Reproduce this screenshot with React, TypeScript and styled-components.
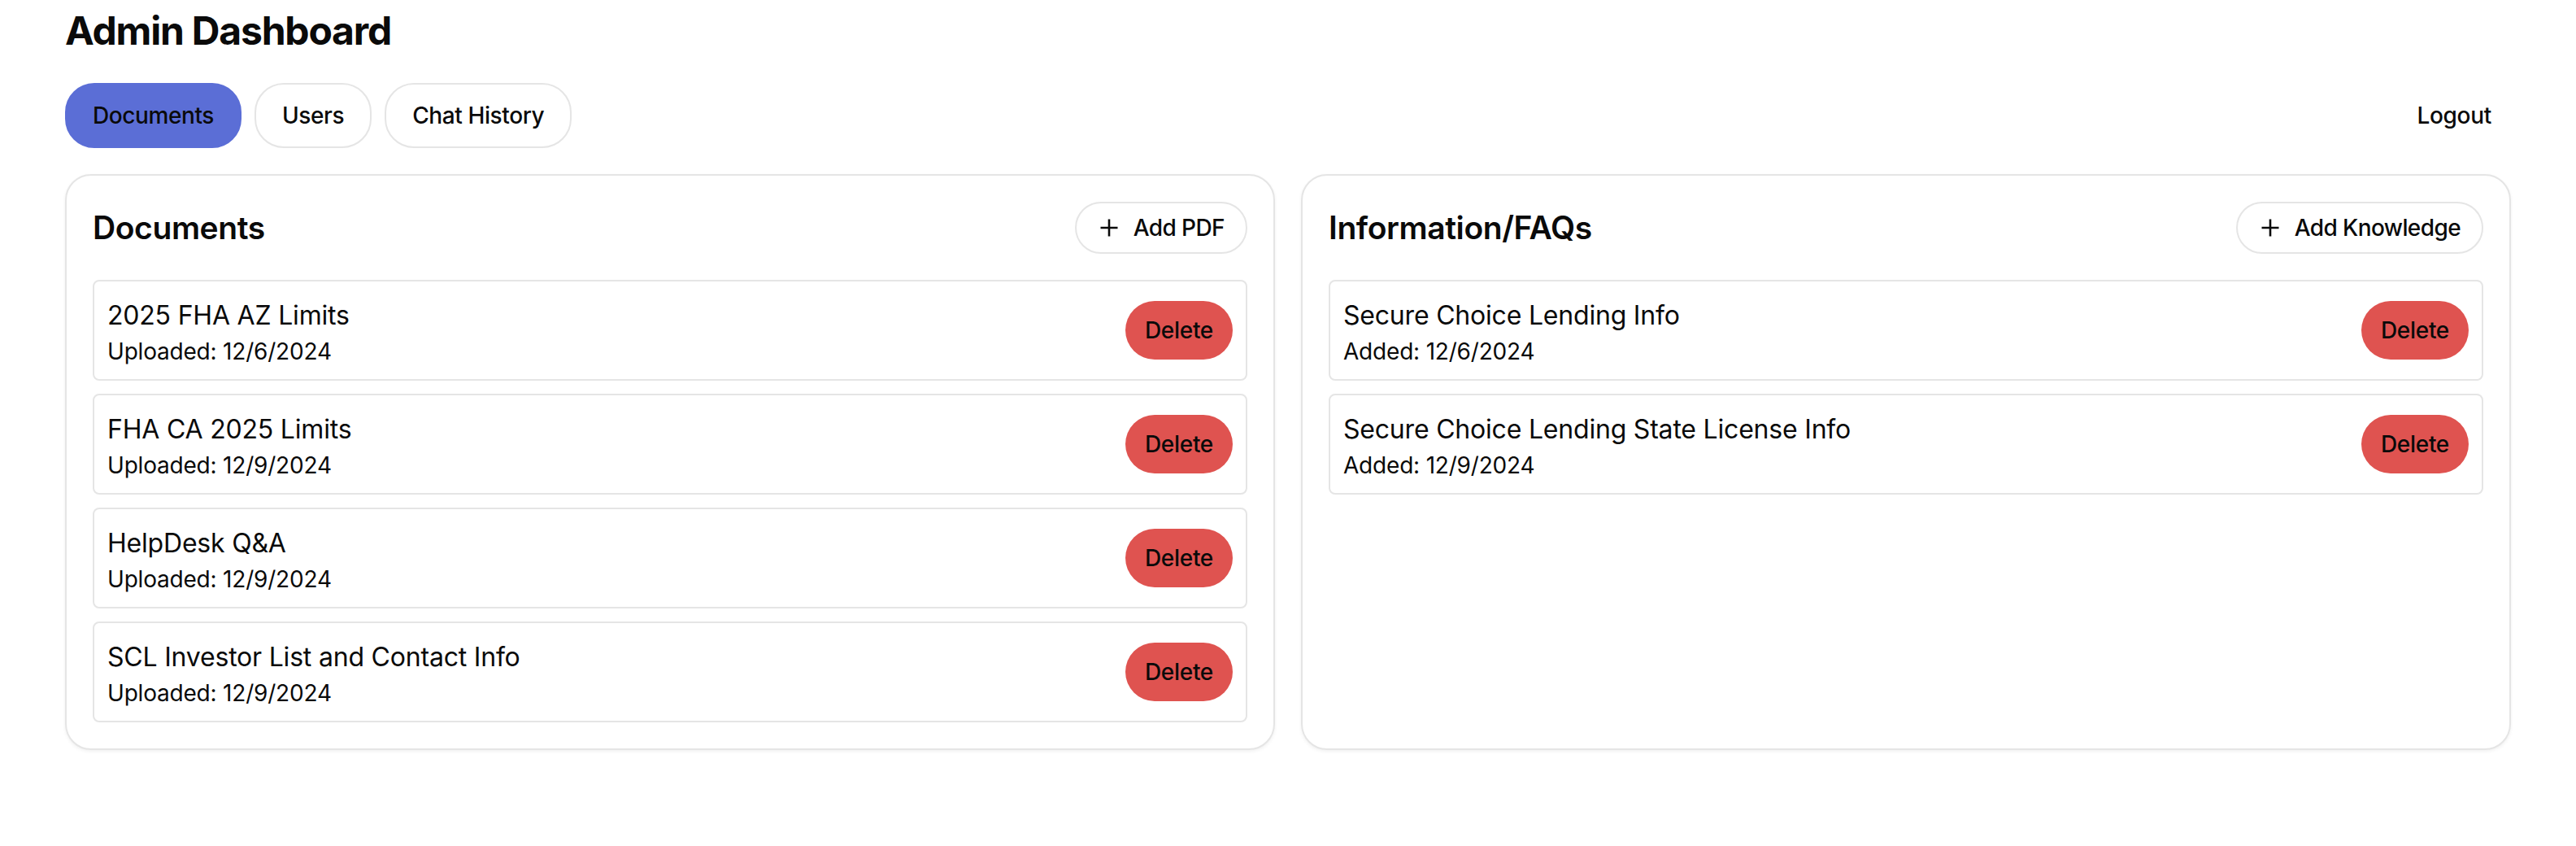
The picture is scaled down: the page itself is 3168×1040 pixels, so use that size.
import React from "react";
import styled, { createGlobalStyle } from "styled-components";

const GlobalStyle = createGlobalStyle`
  * { box-sizing: border-box; }
  html, body { margin: 0; padding: 0; background: #ffffff; }
  body {
    font-family: Inter, "Noto Sans", "Liberation Sans", sans-serif;
    color: #0a0a0a;
    -webkit-font-smoothing: antialiased;
  }
`;

const Page = styled.div`
  padding: 6px 80px 40px;
`;

const Title = styled.h1`
  margin: 0 0 32px;
  font-size: 48px;
  line-height: 64px;
  font-weight: 700;
  letter-spacing: -1.2px;
`;

const NavBar = styled.div`
  display: flex;
  align-items: center;
  justify-content: space-between;
  margin-bottom: 32px;
`;

const Tabs = styled.div`
  display: flex;
  gap: 16px;
`;

const Tab = styled.button<{ $active?: boolean }>`
  height: 80px;
  padding: 0 32px;
  border-radius: 36px;
  border: 2px solid ${(p) => (p.$active ? "#5b6ed6" : "#e5e5e5")};
  background: ${(p) => (p.$active ? "#5b6ed6" : "#ffffff")};
  color: #0a0a0a;
  font-family: inherit;
  font-size: 28px;
  line-height: 40px;
  font-weight: 500;
  letter-spacing: -0.4px;
  cursor: pointer;
`;

const LogoutButton = styled.button`
  height: 80px;
  padding: 0 24px;
  border: none;
  background: transparent;
  color: #0a0a0a;
  font-family: inherit;
  font-size: 28px;
  line-height: 40px;
  font-weight: 500;
  letter-spacing: -0.3px;
  cursor: pointer;
`;

const Columns = styled.div`
  display: grid;
  grid-template-columns: 1fr 1fr;
  gap: 32px;
  align-items: stretch;
`;

const Panel = styled.section`
  border: 2px solid #e5e5e5;
  border-radius: 32px;
  padding: 32px;
  background: #ffffff;
  box-shadow: 0 2px 4px rgba(0, 0, 0, 0.06);
`;

const PanelHeader = styled.div`
  display: flex;
  align-items: center;
  justify-content: space-between;
  margin-bottom: 32px;
`;

const PanelTitle = styled.h2`
  margin: 0;
  font-size: 39px;
  line-height: 56px;
  font-weight: 600;
  letter-spacing: -0.4px;
`;

const AddButton = styled.button`
  display: flex;
  align-items: center;
  gap: 19px;
  height: 64px;
  padding: 0 26px 0 29px;
  border: 2px solid #e5e5e5;
  border-radius: 32px;
  background: #ffffff;
  color: #0a0a0a;
  font-family: inherit;
  font-size: 28px;
  line-height: 40px;
  font-weight: 500;
  letter-spacing: -0.6px;
  cursor: pointer;
`;

const List = styled.div`
  display: flex;
  flex-direction: column;
  gap: 16px;
`;

const Item = styled.div`
  display: flex;
  align-items: center;
  justify-content: space-between;
  padding: 16px;
  border: 2px solid #e5e5e5;
  border-radius: 8px;
`;

const ItemText = styled.div`
  display: flex;
  flex-direction: column;
  padding-top: 2px;
  margin-bottom: -2px;
`;

const ItemName = styled.div`
  font-size: 32px;
  line-height: 48px;
  font-weight: 400;
  letter-spacing: -0.2px;
`;

const ItemMeta = styled.div`
  font-size: 28px;
  line-height: 40px;
  font-weight: 400;
  letter-spacing: -0.2px;
`;

const DeleteButton = styled.button`
  height: 72px;
  padding: 0 24px;
  border: none;
  border-radius: 36px;
  background: #df5350;
  color: #0a0a0a;
  font-family: inherit;
  font-size: 28px;
  line-height: 40px;
  font-weight: 500;
  letter-spacing: -0.3px;
  cursor: pointer;
`;

const PlusIcon = () => (
  <svg width="22" height="22" viewBox="0 0 22 22" fill="none">
    <path d="M11 0.5V21.5M0.5 11H21.5" stroke="#0a0a0a" strokeWidth="2.6" />
  </svg>
);

type Entry = { name: string; date: string };

const documents: Entry[] = [
  { name: "2025 FHA AZ Limits", date: "12/6/2024" },
  { name: "FHA CA 2025 Limits", date: "12/9/2024" },
  { name: "HelpDesk Q&A", date: "12/9/2024" },
  { name: "SCL Investor List and Contact Info", date: "12/9/2024" },
];

const knowledge: Entry[] = [
  { name: "Secure Choice Lending Info", date: "12/6/2024" },
  { name: "Secure Choice Lending State License Info", date: "12/9/2024" },
];

const EntryList = ({ entries, label }: { entries: Entry[]; label: string }) => (
  <List>
    {entries.map((e) => (
      <Item key={e.name}>
        <ItemText>
          <ItemName>{e.name}</ItemName>
          <ItemMeta>
            {label}: {e.date}
          </ItemMeta>
        </ItemText>
        <DeleteButton>Delete</DeleteButton>
      </Item>
    ))}
  </List>
);

export default function App() {
  return (
    <>
      <GlobalStyle />
      <Page>
        <Title>Admin Dashboard</Title>
        <NavBar>
          <Tabs>
            <Tab $active>Documents</Tab>
            <Tab>Users</Tab>
            <Tab>Chat History</Tab>
          </Tabs>
          <LogoutButton>Logout</LogoutButton>
        </NavBar>
        <Columns>
          <Panel>
            <PanelHeader>
              <PanelTitle>Documents</PanelTitle>
              <AddButton>
                <PlusIcon />
                Add PDF
              </AddButton>
            </PanelHeader>
            <EntryList entries={documents} label="Uploaded" />
          </Panel>
          <Panel>
            <PanelHeader>
              <PanelTitle>Information/FAQs</PanelTitle>
              <AddButton>
                <PlusIcon />
                Add Knowledge
              </AddButton>
            </PanelHeader>
            <EntryList entries={knowledge} label="Added" />
          </Panel>
        </Columns>
      </Page>
    </>
  );
}
